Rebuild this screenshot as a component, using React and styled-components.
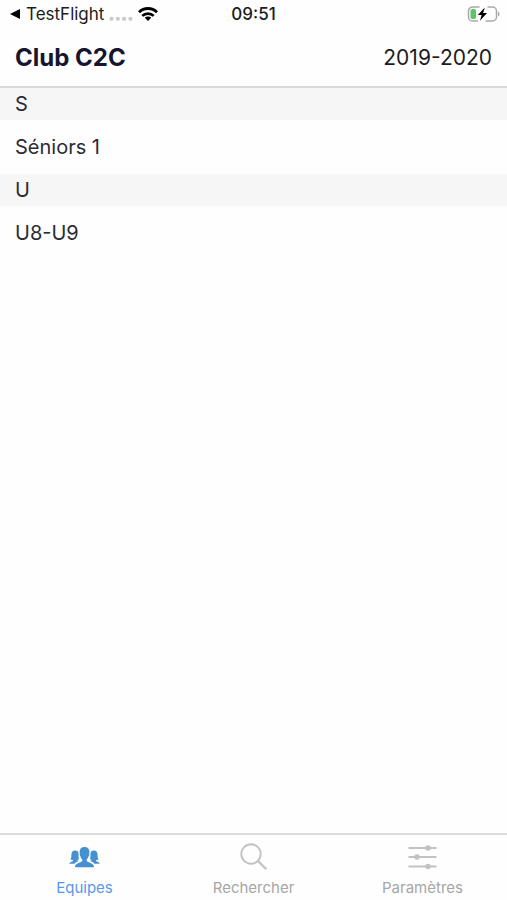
import React from 'react';
import styled, { createGlobalStyle } from 'styled-components';

const sections = [
  { letter: 'S', teams: ['Séniors 1'] },
  { letter: 'U', teams: ['U8-U9'] },
];

const PeopleIcon = () => (
  <svg width="32" height="28" viewBox="0 0 32 28" fill="currentColor" aria-hidden="true">
    <path d="M15.500 4c-3.100 0-4.900 2-4.900 4.900 0 1.100.1 1.500.4 2.200-.5.300-.3 1.700.5 2.300.3 1.400 1 2.200 1.700 2.800v1.800c-.8 1.700-6.900 1.700-7.400 6.200h19.400c-.5-4.500-6.600-4.500-7.400-6.200v-1.800c.7-.6 1.400-1.400 1.700-2.800.8-.6 1-2 .5-2.300.3-.7.4-1.100.4-2.200C20.400 6 18.600 4 15.500 4z" />
    <path d="M6.200 7.500c-2.600 0-3.800 1.600-3.800 4.200 0 2-.2 3.600-1 4.600.8.700 1.600.9 2.600.9v1C2.800 18.800.6 18.700.2 20.800h5.400c1-1.400 2.600-2.100 4.400-2.700-.8-.2-1.300-.4-1.600-.8v-.5c.7-.1 1.300-.3 1.800-.7-.8-1.300-.6-2.500-.6-4.600 0-2.500-1-4-3.400-4z" />
    <path d="M24.800 7.500c2.600 0 3.800 1.600 3.800 4.200 0 2 .2 3.600 1 4.600-.8.700-1.600.9-2.600.9v1c1.200.6 3.400.5 3.800 2.600h-5.400c-1-1.400-2.600-2.100-4.400-2.700.8-.2 1.300-.4 1.600-.8v-.5c-.7-.1-1.300-.3-1.800-.7.8-1.300.6-2.500.6-4.600 0-2.500 1-4 3.400-4z" />
  </svg>
);

const SearchIcon = () => (
  <svg width="32" height="28" viewBox="0 0 32 28" fill="none" stroke="currentColor" aria-hidden="true">
    <circle cx="13" cy="11" r="9.700" strokeWidth="1.900" />
    <path d="M20 18l8.300 8.300" strokeWidth="2.300" />
  </svg>
);

const OptionsIcon = () => (
  <svg width="32" height="28" viewBox="0 0 32 28" fill="currentColor" aria-hidden="true">
    <path d="M1.500 5h28M1.500 14h28M1.500 23.500h28" stroke="currentColor" strokeWidth="2.200" />
    <circle cx="21" cy="5" r="2.700" />
    <circle cx="10" cy="14" r="2.700" />
    <circle cx="21" cy="23.500" r="2.700" />
  </svg>
);

const BackIcon = () => (
  <svg width="10" height="10" viewBox="0 0 10 10" aria-hidden="true">
    <path d="M0 5L10 0v10z" fill="#000" />
  </svg>
);

const SignalIcon = () => (
  <svg width="24" height="14" viewBox="0 0 24 14" fill="#cacaca" aria-hidden="true">
    <circle cx="2.500" cy="11.800" r="2.100" />
    <circle cx="8.800" cy="11.800" r="2.100" />
    <circle cx="15.100" cy="11.800" r="2.100" />
    <circle cx="21.400" cy="11.800" r="2.100" />
  </svg>
);

const WifiIcon = () => (
  <svg width="20" height="14" viewBox="0 0 20 14" fill="none" stroke="#000" aria-hidden="true">
    <path d="M1 5.300a12.800 12.800 0 0 1 18 0" strokeWidth="3" />
    <path d="M4.300 8.900a8.100 8.100 0 0 1 11.400 0" strokeWidth="2.700" />
    <path d="M10 14l-3.200-3.200a4.500 4.500 0 0 1 6.400 0z" fill="#000" stroke="none" />
  </svg>
);

const BatteryIcon = () => (
  <svg width="34" height="16" viewBox="0 0 34 16" fill="none" aria-hidden="true">
    <path d="M12.500 1H5.500A4 4 0 0 0 1.500 5v6a4 4 0 0 0 4 4h5.500M20.500 1h5a4 4 0 0 1 4 4v6a4 4 0 0 1-4 4h-7" stroke="#a9a9a9" strokeWidth="1.500" />
    <path d="M31 5.500c2 .8 2 4.200 0 5z" fill="#a9a9a9" />
    <rect x="3.500" y="3" width="5.500" height="10" rx="1.800" fill="#5fc564" />
    <path d="M17.800 1.500L10.800 9h3.800l-1.600 5.700L20 7h-3.900z" fill="#000" />
  </svg>
);

const tabs = [
  { label: 'Equipes', Icon: PeopleIcon, active: true },
  { label: 'Rechercher', Icon: SearchIcon },
  { label: 'Paramètres', Icon: OptionsIcon },
];

const App = () => (
  <Screen>
    <GlobalStyle />
    <StatusBar>
      <StatusLeft>
        <BackButton type="button">
          <BackIcon />
          TestFlight
        </BackButton>
        <SignalIcon />
        <WifiIcon />
      </StatusLeft>
      <Clock>09:51</Clock>
      <StatusRight>
        <BatteryIcon />
      </StatusRight>
    </StatusBar>
    <Header>
      <Title>Club C2C</Title>
      <Season>2019-2020</Season>
    </Header>
    <Content>
      {sections.map(({ letter, teams }) => (
        <section key={letter}>
          <SectionTitle>{letter}</SectionTitle>
          {teams.map((team) => (
            <TeamButton key={team} type="button">{team}</TeamButton>
          ))}
        </section>
      ))}
    </Content>
    <TabBar>
      {tabs.map(({ label, Icon, active }) => (
        <TabButton key={label} type="button" $active={active}>
          <Icon />
          <TabLabel $active={active}>{label}</TabLabel>
        </TabButton>
      ))}
    </TabBar>
  </Screen>
);

const GlobalStyle = createGlobalStyle`
  * {
    box-sizing: border-box;
  }
  body {
    margin: 0;
    background: #fefefe;
    color: #2b2b35;
    font-family: Inter, "Liberation Sans", sans-serif;
  }
  button {
    padding: 0;
    border: 0;
    background: none;
    color: inherit;
    font: inherit;
    cursor: pointer;
  }
  svg {
    display: block;
    flex-shrink: 0;
  }
`;

const Screen = styled.div`
  display: flex;
  flex-direction: column;
  min-height: 100vh;
`;
const StatusBar = styled.div`
  display: grid;
  grid-template-columns: 1fr auto 1fr;
  align-items: center;
  height: 28px;
  padding: 0 6px;
  color: #1c1c1c;
  font-size: 17px;
`;
const StatusLeft = styled.div`
  display: flex;
  align-items: center;
  gap: 5px;
  padding-left: 4px;
`;
const BackButton = styled.button`
  display: flex;
  align-items: center;
  gap: 6px;
`;
const Clock = styled.span`
  font-weight: 500;
`;
const StatusRight = styled.div`
  display: flex;
  justify-content: flex-end;
`;
const Header = styled.header`
  display: flex;
  align-items: center;
  justify-content: space-between;
  height: 60px;
  padding: 0 15px;
  border-bottom: 2px solid #d8d8d8;
`;
const Title = styled.h1`
  margin: 0;
  color: #15152f;
  font-size: 24px;
  font-weight: 700;
`;
const Season = styled.span`
  color: #1c1c1e;
  font-size: 21px;
`;
const Content = styled.main`
  flex: 1;
`;
const SectionTitle = styled.h2`
  margin: 0;
  padding: 0 15px;
  background: #f6f6f6;
  font-size: 20px;
  font-weight: 400;
  line-height: 32px;
`;
const TeamButton = styled.button`
  display: block;
  width: 100%;
  padding: 0 15px;
  font-size: 20px;
  line-height: 54px;
  text-align: left;
`;
const TabBar = styled.nav`
  display: grid;
  grid-template-columns: repeat(3, 1fr);
  border-top: 2px solid #dcdcdc;
`;
const TabButton = styled.button`
  display: flex;
  flex-direction: column;
  align-items: center;
  gap: 8px;
  padding: 8px 0 3px;
  color: ${({ $active }) => ($active ? '#4790d0' : '#c2c2c2')};
`;
const TabLabel = styled.span`
  color: ${({ $active }) => ($active ? '#5a97ec' : '#a6a6a6')};
  font-size: 15px;
  line-height: 18px;
`;

export default App;
